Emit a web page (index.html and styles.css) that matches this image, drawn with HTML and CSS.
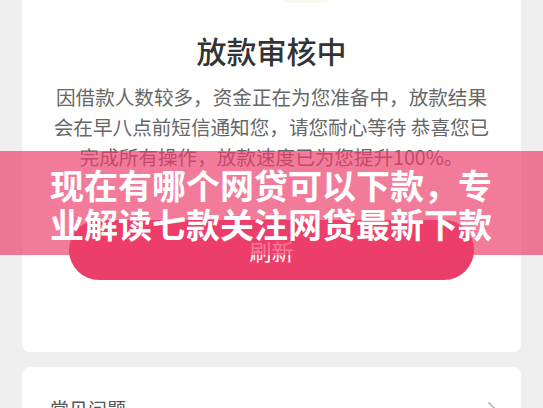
FILE: index.html
```html
<!DOCTYPE html>
<html lang="zh-CN">
<head>
    <meta charset="UTF-8">
    <meta name="viewport" content="width=device-width, initial-scale=1.0">
    <title>放款审核中</title>
    <link rel="stylesheet" href="styles.css">
</head>
<body>

    <div class="page">
        <!-- 审核状态 -->
        <div class="card card-status">
            <div class="status-icon"></div>
            <h1 class="status-title">放款审核中</h1>
            <p class="status-desc">因借款人数较多，资金正在为您准备中，放款结果会在早八点前短信通知您，请您耐心等待 恭喜您已完成所有操作，放款速度已为您提升100%。</p>
            <button class="refresh-button">刷新</button>
        </div>

        <!-- 常见问题 -->
        <div class="card card-faq">
            <span class="faq-label">常见问题</span>
            <svg class="faq-arrow" width="10" height="16" viewBox="0 0 10 16">
                <path d="M2 2 L8 8 L2 14" fill="none" stroke="#c4c4c4" stroke-width="2" stroke-linecap="round" stroke-linejoin="round"/>
            </svg>
        </div>

        <div class="headline-banner">
            <p class="headline-text">现在有哪个网贷可以下款，专业解读七款关注网贷最新下款</p>
        </div>
    </div>

</body>
</html>
```

FILE: styles.css
```css
/* --- 基础 --- */
body {
    margin: 0;
    height: 408px;
    overflow: hidden;
    background-color: #efefef;
    font-family: "Noto Sans CJK SC", "Noto Sans", sans-serif;
}

.page {
    position: relative;
    padding: 0 22px;
}

.card {
    background-color: #fff;
    border-radius: 8px;
}

/* --- 审核状态卡片 --- */
.card-status {
    border-radius: 0 0 8px 8px;
    padding-bottom: 72px;
    text-align: center;
}

.status-icon {
    width: 44px;
    height: 3px;
    margin-left: 262px;
    background-color: #fbf9ef;
    border-radius: 0 0 20px 20px;
}

.status-title {
    margin: 27px 0 0;
    font-size: 30px;
    line-height: 40px;
    font-weight: 500;
    color: #333;
}

.status-desc {
    margin: 12px 0 0;
    padding: 0 28px;
    font-size: 19.6px;
    line-height: 30px;
    color: #666;
}

.refresh-button {
    display: block;
    width: 405px;
    height: 60px;
    margin: 48px auto 0;
    border: none;
    border-radius: 30px;
    background-color: #ec3e6a;
    color: #fff;
    font-family: inherit;
    font-size: 22px;
}

/* --- 常见问题 --- */
.card-faq {
    display: flex;
    justify-content: space-between;
    align-items: center;
    margin-top: 15px;
    padding: 28px 24px 28px 28px;
}

.faq-label {
    font-size: 19px;
    line-height: 27px;
    color: #555;
}

/* --- 标题横幅 --- */
.headline-banner {
    position: absolute;
    top: 151px;
    left: 0;
    right: 0;
    padding: 14px 50px 12px;
    background-color: rgba(238, 61, 106, 0.68);
}

.headline-text {
    margin: 0;
    font-size: 34px;
    line-height: 39px;
    font-weight: 700;
    color: #fff;
}
```
